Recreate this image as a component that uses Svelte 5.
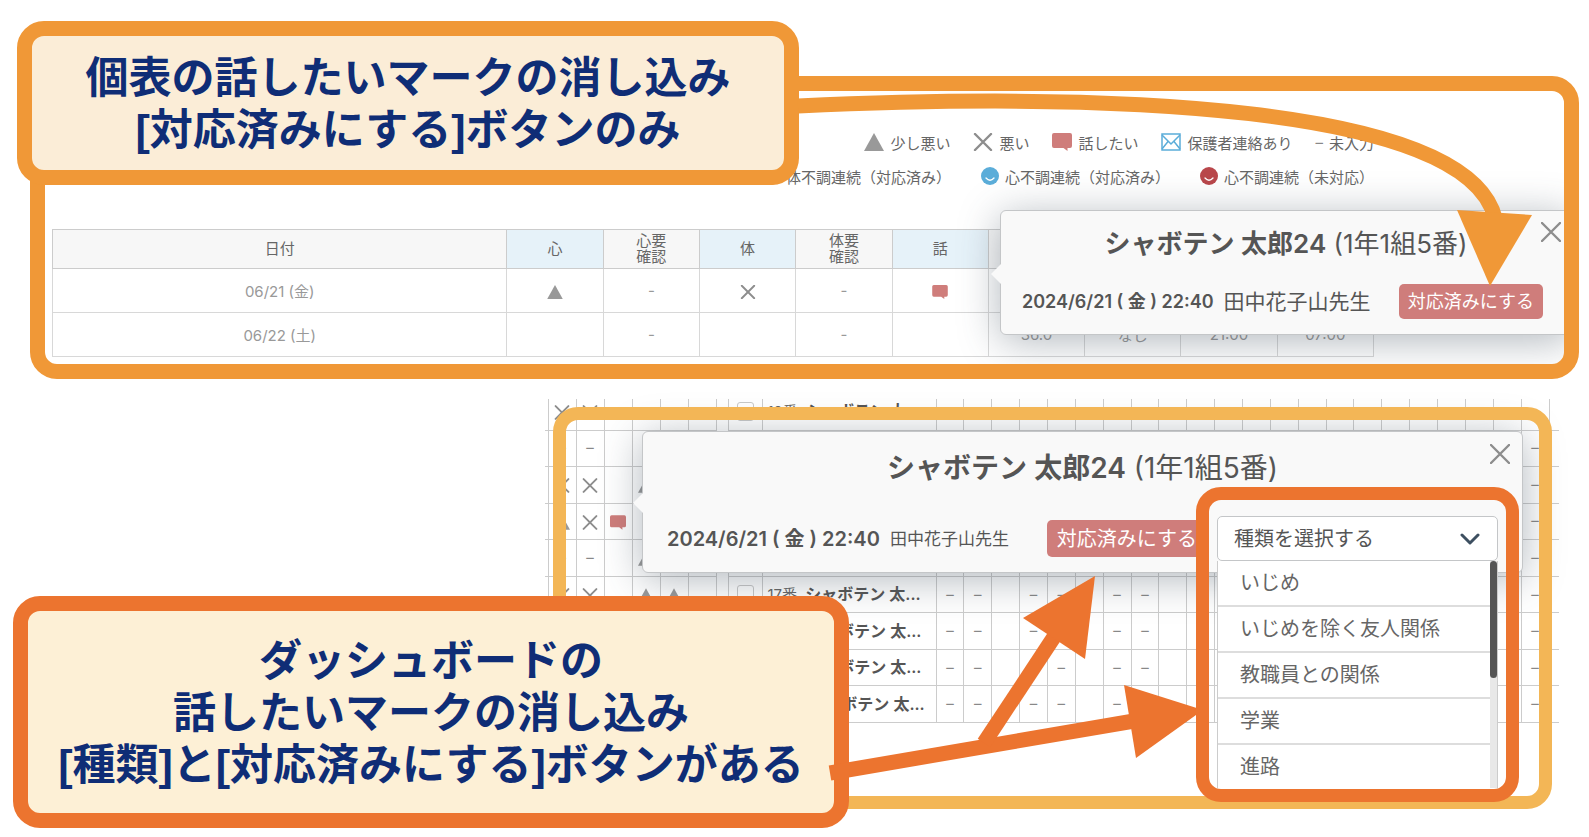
<script lang="ts">
    type Mark = "tri" | "x" | "talk" | "dash" | "";

    const students = [
        { no: 12, marks: ["x", "x", "", "", "", ""] },
        { no: 13, marks: ["dash", "dash", "", "", "", ""] },
        { no: 14, marks: ["x", "x", "", "tri", "", ""] },
        { no: 15, marks: ["tri", "x", "talk", "", "", ""] },
        { no: 16, marks: ["dash", "dash", "", "tri", "", ""] },
        { no: 17, marks: ["x", "x", "", "tri", "tri", ""] },
        { no: 18, marks: ["", "", "", "", "", ""] },
        { no: 19, marks: ["", "", "", "", "", ""] },
        { no: 20, marks: ["", "", "", "", "", ""] },
    ] as { no: number; marks: Mark[] }[];

    const days = Array.from({ length: 22 }, (_, i) => i);

    const records = [
        { date: "06/21 (金)", cells: ["tri", "-", "x", "-", "talk", "", "", "", ""] },
        {
            date: "06/22 (土)",
            cells: ["", "-", "", "-", "", "36.0", "なし", "21:00", "07:00"],
        },
    ];

    const kinds = [
        "いじめ",
        "いじめを除く友人関係",
        "教職員との関係",
        "学業",
        "進路",
    ];

    let kind = $state("");

    // rows 1-4 lie under the open popup
    function isCovered(row: number) {
        return row > 0 && row < 5;
    }

    function hasDash(row: number, day: number) {
        if (row === 0 || day % 3 === 2) return false;
        return day === 21 || (!isCovered(row) && day < 8);
    }
</script>

{#snippet icon(name: string)}
    {#if name === "tri"}
        <svg class="icon" viewBox="0 0 20 18" aria-hidden="true">
            <path d="M10 0 20 18H0Z" fill="#999" />
        </svg>
    {:else if name === "x"}
        <svg class="icon" viewBox="0 0 20 18" aria-hidden="true">
            <path d="M2 1 18 17M18 1 2 17" stroke="#8d8d8d" stroke-width="2.400" stroke-linecap="round" />
        </svg>
    {:else if name === "talk"}
        <svg class="icon" viewBox="0 0 20 18" aria-hidden="true">
            <path
                d="M2 0H18Q20 0 20 2V13Q20 15 18 15H15.500V18L11.500 15H2Q0 15 0 13V2Q0 0 2 0Z"
                fill="#cf7d7b"
            />
        </svg>
    {:else if name === "mail"}
        <svg class="icon" viewBox="0 0 20 18" fill="none" stroke="#5badd9" stroke-width="1.500" aria-hidden="true">
            <path d="M1 1H19V17H1Z" />
            <path d="M1 2 10 11 19 2M1 16 7 8.500M19 16 13 8.500" />
        </svg>
    {:else if name === "dash"}
        <span class="dash">–</span>
    {/if}
{/snippet}

{#snippet face(color: string)}
    <svg class="face" viewBox="0 0 18 18" aria-hidden="true">
        <circle cx="9" cy="9" r="9" fill={color} />
        <path d="M5 11Q9 15.500 13 11" fill="none" stroke="#fff" stroke-width="1.300" stroke-linecap="round" />
    </svg>
{/snippet}

{#snippet popupHead()}
    <h2><strong>シャボテン 太郎24</strong> (1年1組5番)</h2>
    <button class="close" aria-label="閉じる">
        <svg viewBox="0 0 20 20" aria-hidden="true">
            <path d="M1 1 19 19M19 1 1 19" stroke="#8d8d8d" stroke-width="2.400" stroke-linecap="round" />
        </svg>
    </button>
{/snippet}

<main>
    <!-- Personal sheet -->
    <section class="sheet">
        <ul class="legend">
            <li>{@render icon("tri")}少し悪い</li>
            <li>{@render icon("x")}悪い</li>
            <li>{@render icon("talk")}話したい</li>
            <li>{@render icon("mail")}保護者連絡あり</li>
            <li>{@render icon("dash")}未入力</li>
        </ul>
        <ul class="legend faces">
            <li>{@render face("#eda13b")}体不調連続（対応済み）</li>
            <li>{@render face("#5badd9")}心不調連続（対応済み）</li>
            <li>{@render face("#b9474b")}心不調連続（未対応）</li>
        </ul>

        <table class="records">
            <thead>
                <tr>
                    <th class="date">日付</th>
                    <th class="blue">心</th>
                    <th>心要<br />確認</th>
                    <th class="blue">体</th>
                    <th>体要<br />確認</th>
                    <th class="blue">話</th>
                    <th></th>
                    <th></th>
                    <th></th>
                    <th></th>
                </tr>
            </thead>
            <tbody>
                {#each records as record}
                    <tr>
                        <td>{record.date}</td>
                        {#each record.cells as cell}
                            <td>
                                {#if cell === "tri" || cell === "x" || cell === "talk"}
                                    {@render icon(cell)}
                                {:else}
                                    {cell}
                                {/if}
                            </td>
                        {/each}
                    </tr>
                {/each}
            </tbody>
        </table>

        <div class="popup small">
            {@render popupHead()}
            <div class="popup-row">
                <time>2024/6/21 ( 金 ) 22:40</time>
                <span class="teacher">田中花子山先生</span>
                <button class="done">対応済みにする</button>
            </div>
        </div>
    </section>

    <!-- Dashboard -->
    <section class="dashboard">
        <div class="grid-clip">
            <table class="grid">
                <colgroup>
                    <col class="c-edge" />
                    {#each { length: 6 } as _}
                        <col class="c-mark" />
                    {/each}
                    <col class="c-gap" />
                    <col class="c-check" />
                    <col class="c-name" />
                    {#each days as _}
                        <col />
                    {/each}
                    <col class="c-end" />
                </colgroup>
                <tbody>
                    {#each students as student, row}
                        <tr>
                            <td></td>
                            {#each student.marks as mark}
                                <td>{@render icon(mark)}</td>
                            {/each}
                            <td class="gap"></td>
                            <td>
                                <input type="checkbox" aria-label="{student.no}番を選択" />
                            </td>
                            <td class="name">
                                {#if !isCovered(row)}
                                    {student.no}番 <b>シャボテン 太...</b>
                                {/if}
                            </td>
                            {#each days as day}
                                <td>
                                    {#if hasDash(row, day)}
                                        {@render icon("dash")}
                                    {/if}
                                </td>
                            {/each}
                            <td></td>
                        </tr>
                    {/each}
                </tbody>
            </table>
        </div>

        <div class="popup large">
            {@render popupHead()}
            <div class="popup-row">
                <time>2024/6/21 ( 金 ) 22:40</time>
                <span class="teacher">田中花子山先生</span>
                <button class="done">対応済みにする</button>
                <div class="dropdown">
                    <select bind:value={kind} aria-label="種類">
                        <option value="">種類を選択する</option>
                        {#each kinds as item}
                            <option value={item}>{item}</option>
                        {/each}
                    </select>
                    <svg class="chevron" viewBox="0 0 20 12" aria-hidden="true">
                        <path
                            d="M2 2 10 10 18 2"
                            fill="none"
                            stroke="#3d4f60"
                            stroke-width="3"
                            stroke-linecap="round"
                            stroke-linejoin="round"
                        />
                    </svg>
                    <div class="menu">
                        <ul>
                            {#each kinds as item}
                                <li>
                                    <button onclick={() => (kind = item)}>{item}</button>
                                </li>
                            {/each}
                        </ul>
                        <div class="track"><div class="thumb"></div></div>
                    </div>
                </div>
            </div>
        </div>

        <div class="frame"></div>
        <div class="highlight"></div>
    </section>

    <!-- Notes and arrows -->
    <p class="note first">
        個表の話したいマークの消し込み<br />[対応済みにする]ボタンのみ
    </p>
    <p class="note second">
        ダッシュボードの<br />話したいマークの消し込み<br
        />[種類]と[対応済みにする]ボタンがある
    </p>

    <svg class="arrows" viewBox="0 0 1589 837" aria-hidden="true">
        <g fill="none" stroke="#f09837" stroke-width="15">
            <path d="M798 106C1100 92 1467 103 1495 218" />
        </g>
        <path d="M1457 210 1532 215 1490 286Z" fill="#f09837" />
        <g fill="none" stroke="#ec742f" stroke-width="15">
            <path d="M830 773 1134 721" />
            <path d="M984 743 1054 637" />
        </g>
        <path d="M1124 685 1203 710 1136 758Z" fill="#ec742f" />
        <path d="M1023 618 1095 576 1085 659Z" fill="#ec742f" />
    </svg>
</main>

<style>
    :global(body) {
        margin: 0;
        background: #fff;
    }

    main {
        position: relative;
        display: flow-root;
        overflow: hidden;
        font-family: Inter, "Noto Sans CJK JP", sans-serif;
        color: #666;
    }

    button,
    select {
        font-family: inherit;
        cursor: pointer;
    }

    ul {
        list-style: none;
        margin: 0;
        padding: 0;
    }

    .icon {
        display: inline-block;
        width: 20px;
        height: 18px;
        vertical-align: middle;
    }

    .face {
        width: 18px;
        height: 18px;
    }

    .dash {
        color: #888;
    }

    /* Personal sheet */
    .sheet {
        position: relative;
        overflow: hidden;
        margin: 76px 10px 0 30px;
        padding: 34px 190px 7px 7px;
        border: 15px solid #f09837;
        border-radius: 27px;
    }

    .legend {
        display: flex;
        justify-content: flex-end;
        gap: 23px;
        height: 34px;
        font-size: 15px;
        white-space: nowrap;
    }

    .legend.faces {
        gap: 30px;
    }

    .legend li {
        display: flex;
        align-items: center;
        gap: 6px;
    }

    .records {
        width: 100%;
        margin-top: 36px;
        border: 1px solid #bbb;
        border-collapse: collapse;
        table-layout: fixed;
        text-align: center;
    }

    .records th {
        height: 39px;
        padding: 0;
        border: 1px solid #ccc;
        background: #f7f7f7;
        font-size: 15px;
        font-weight: normal;
        line-height: 16px;
        box-sizing: border-box;
    }

    .records th.date {
        width: 34.4%;
    }

    .records th.blue {
        background: #e6f2f9;
    }

    .records td {
        height: 44px;
        padding: 0;
        border: 1px solid #d8d8d8;
        color: #999;
        font-size: 15px;
        box-sizing: border-box;
    }

    .records .icon {
        width: 16px;
        height: 14px;
    }

    /* Popups */
    .popup {
        position: absolute;
        border: 1px solid #c4c6c8;
        border-radius: 6px;
        background: #f9f9f9;
        box-shadow: 0 6px 40px rgba(60, 75, 90, 0.4);
        color: #555;
        box-sizing: border-box;
        white-space: nowrap;
    }

    .popup::before {
        content: "";
        position: absolute;
        left: -10px;
        border: 10px solid transparent;
        border-left-width: 0;
        border-right-color: #f9f9f9;
    }

    .popup h2 {
        margin: 0;
        font-weight: normal;
        text-align: center;
    }

    .popup strong,
    .popup time {
        font-weight: 600;
    }

    .popup-row {
        display: flex;
        align-items: center;
        gap: 10px;
    }

    .popup time,
    .teacher {
        padding-bottom: 3px;
    }

    .close {
        position: absolute;
        padding: 0;
        border: 0;
        background: none;
        line-height: 0;
    }

    .close svg {
        width: 20px;
        height: 20px;
    }

    .done {
        margin-left: auto;
        padding: 0 9px 3px;
        border: 0;
        border-radius: 5px;
        background: #cf7d7b;
        color: #fff;
    }

    .small {
        top: 119px;
        right: -8px;
        width: 572px;
        padding: 15px 0;
    }

    .small::before {
        top: 53px;
    }

    .small h2 {
        font-size: 26px;
        line-height: 36px;
    }

    .small .popup-row {
        margin-top: 22px;
        padding: 0 28px 0 21px;
        font-size: 18px;
    }

    .small .teacher {
        font-size: 21px;
    }

    .small .done {
        height: 35px;
        font-size: 18px;
    }

    .small .close {
        top: 11px;
        right: 10px;
    }

    .large {
        top: 32px;
        left: 97px;
        right: 36px;
        padding: 16px 0 11px;
    }

    .large::before {
        top: 61px;
    }

    .large h2 {
        font-size: 28px;
        line-height: 40px;
    }

    .large .popup-row {
        margin-top: 28px;
        padding: 0 24px;
        font-size: 20px;
    }

    .large .teacher {
        font-size: 17px;
    }

    .large .done {
        height: 37px;
        padding: 0 10px 3px;
        font-size: 20px;
    }

    .large .close {
        top: 12px;
        right: 12px;
    }

    /* Dropdown */
    .dropdown {
        position: relative;
        width: 281px;
    }

    .dropdown select {
        display: block;
        width: 100%;
        height: 45px;
        padding: 0 16px;
        border: 1px solid #c4c6c8;
        border-radius: 5px;
        background: #fff;
        color: #555;
        font-size: 20px;
        appearance: none;
    }

    .chevron {
        position: absolute;
        top: 17px;
        right: 18px;
        width: 20px;
        height: 12px;
        pointer-events: none;
    }

    .menu {
        position: absolute;
        top: 45px;
        left: 0;
        right: 0;
        display: flex;
        height: 227px;
        overflow: hidden;
        border: 1px solid #ccc;
        border-width: 0 1px;
        background: #fff;
        box-sizing: border-box;
    }

    .menu ul {
        flex: 1;
    }

    .menu li {
        height: 46px;
        border-bottom: 2px solid #ddd;
        box-sizing: border-box;
    }

    .menu button {
        width: 100%;
        height: 100%;
        padding: 0 22px 3px;
        border: 0;
        background: none;
        color: #666;
        font-size: 20px;
        text-align: left;
    }

    .track {
        width: 7px;
        background: #e8e8e8;
    }

    .thumb {
        height: 117px;
        border-radius: 4px;
        background: #555;
    }

    /* Dashboard */
    .dashboard {
        position: relative;
        margin: 20px 30px 0 545px;
        padding-bottom: 114px;
    }

    .grid-clip {
        display: flex;
        align-items: flex-end;
        height: 324px;
        overflow: hidden;
    }

    .grid {
        flex: none;
        width: 100%;
        height: 330px;
        border-collapse: collapse;
        table-layout: fixed;
    }

    .c-edge {
        width: 3px;
    }

    .c-mark {
        width: 28px;
    }

    .c-gap {
        width: 12px;
    }

    .c-check {
        width: 34px;
    }

    .c-name {
        width: 174px;
    }

    .c-end {
        width: 10px;
    }

    .grid td {
        height: 35px;
        padding: 0;
        border: 1px solid #ccc;
        border-width: 1px 0 1px 1px;
        font-size: 15px;
        line-height: 20px;
        text-align: center;
        white-space: nowrap;
    }

    .grid td:first-child {
        border-left: 0;
    }

    .grid td.gap {
        border-top: 0;
        border-bottom: 0;
    }

    .grid td.name {
        padding-left: 5px;
        text-align: left;
    }

    .name b {
        margin-left: 4px;
        color: #555;
        font-size: 16px;
        font-weight: 600;
    }

    .grid .icon {
        width: 16px;
        height: 15px;
    }

    .grid input {
        display: block;
        width: 17px;
        height: 19px;
        margin: 0 auto;
        border: 1px solid #c8c8c8;
        border-radius: 3px;
        background: #fff;
        appearance: none;
    }

    .frame {
        position: absolute;
        top: 8px;
        left: 8px;
        right: 7px;
        bottom: 28px;
        border: 13px solid #f3b656;
        border-radius: 25px;
        pointer-events: none;
    }

    .highlight {
        position: absolute;
        top: 88px;
        right: 40px;
        bottom: 35px;
        width: 297px;
        border: 13px solid #ec742f;
        border-radius: 25px;
        pointer-events: none;
    }

    /* Notes */
    .note {
        position: absolute;
        display: flow-root;
        margin: 0;
        border: 15px solid #f09837;
        border-radius: 27px;
        background: #fbedd7;
        box-sizing: border-box;
        color: #0f2d76;
        font-family: "Liberation Sans", "Noto Sans CJK JP", sans-serif;
        font-size: 43px;
        font-weight: 600;
        line-height: 52px;
        text-align: center;
        white-space: nowrap;
    }

    .first {
        top: 21px;
        left: 17px;
        width: 782px;
        padding: 16px 0 14px;
    }

    .second {
        top: 596px;
        left: 13px;
        width: 836px;
        padding: 24px 0 22px;
        border-color: #ec742f;
        background: #fdf0d6;
    }

    .arrows {
        position: absolute;
        top: 0;
        left: 0;
        width: 1589px;
        height: 837px;
        pointer-events: none;
    }
</style>
